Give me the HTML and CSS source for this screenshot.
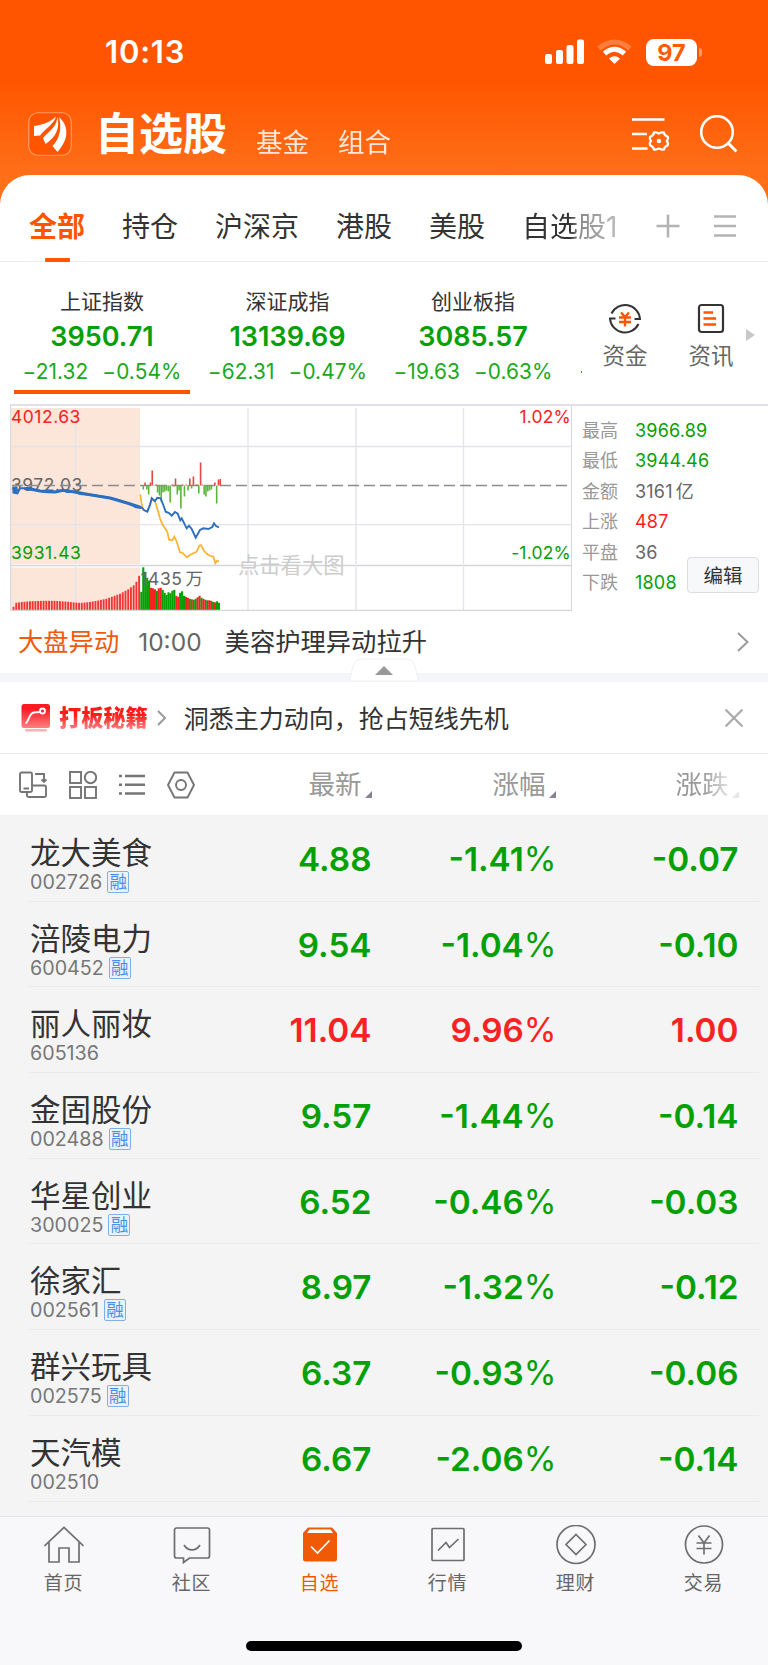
FILE: index.html
```html
<!DOCTYPE html>
<html lang="zh-CN">
<head>
    <meta charset="UTF-8">
    <meta name="viewport" content="width=device-width, initial-scale=1.0">
    <title>自选股</title>
    <link rel="stylesheet" href="styles.css">
</head>
<body>
    <header class="header">
        <div class="status-bar">
            <span class="time">10:13</span>
            <svg class="signal" width="40" height="26" viewBox="0 0 40 26" fill="#fff">
                <rect x="0" y="15" width="7" height="10" rx="2"/>
                <rect x="11" y="11" width="7" height="14" rx="2"/>
                <rect x="21.5" y="6" width="7" height="19" rx="2"/>
                <rect x="32" y="0.5" width="7" height="24.5" rx="2"/>
            </svg>
            <svg class="wifi" width="36" height="26" viewBox="0 0 36 26" fill="none" stroke="#fff">
                <path d="M2 9.5Q17.5 -3.5 33 9.5" stroke-width="5" opacity="0.25"/>
                <path d="M7.5 14.5Q17.5 6 27.5 14.5" stroke-width="5"/>
                <path d="M12 19.5Q17.5 15 23 19.5L17.5 25Z" fill="#fff" stroke="none"/>
            </svg>
            <span class="battery">97</span>
            <span class="battery-cap"></span>
        </div>
        <div class="title-bar">
            <svg class="logo" width="44" height="44" viewBox="0 0 44 44">
                <rect x="0.75" y="0.75" width="42.5" height="42.5" rx="9" fill="#ff5500" stroke="#ff9a66" stroke-width="1.2"/>
                <path d="M6 14C15 13 22 10 28 4.5C26 12 17 17 12 23.5L6 24Z" fill="#fff"/>
                <path d="M29 4.5C30 14 21 19 15 26L17.5 32C27 26 33 16 29 4.5Z" fill="#fff"/>
                <path d="M31 5C38 11 40 20 37 28C35 33 32 37 29.5 40L24.5 34C32 26 34 16 31 5Z" fill="#fff"/>
            </svg>
            <h1>自选股</h1>
            <span class="sub-title">基金</span>
            <span class="sub-title">组合</span>
            <svg class="manage" width="38" height="36" viewBox="0 0 38 36" fill="none" stroke="#fff" stroke-width="2.6">
                <path d="M0 3.5H32.5M0 18H15M0 32.5H15.5"/>
                <path d="M22 16.5Q24.5 16 26.9 17.6Q29.3 16 31.8 16.5Q32.2 19.4 35.8 20.8Q36.6 23 34.8 25Q36.6 27 35.8 29.2Q32.2 30.6 31.8 33.5Q29.3 34 26.9 32.4Q24.5 34 22 33.5Q21.6 30.6 18 29.2Q17.2 27 19 25Q17.2 23 18 20.8Q21.6 19.4 22 16.5Z" stroke-width="2.3" stroke-linejoin="round"/>
                <circle cx="26.9" cy="25" r="2.2" fill="#fff" stroke="none"/>
            </svg>
            <svg class="search" width="38" height="38" viewBox="0 0 38 38" fill="none" stroke="#fff" stroke-width="2.6">
                <circle cx="17" cy="17" r="15.8"/>
                <path d="M28 28L36.5 36.5" stroke-width="3"/>
            </svg>
        </div>
    </header>

    <main class="panel">
        <nav class="tabs">
            <span class="tab active">全部</span>
            <span class="tab">持仓</span>
            <span class="tab">沪深京</span>
            <span class="tab">港股</span>
            <span class="tab">美股</span>
            <span class="tab fade">自选股1</span>
            <svg class="tab-add" width="24" height="24" viewBox="0 0 24 24" stroke="#b3b3b3" stroke-width="2.6"><path d="M0.5 12H23.5M12 0.5V23.5"/></svg>
            <svg class="tab-menu" width="22" height="24" viewBox="0 0 22 24" stroke="#b3b3b3" stroke-width="2.6"><path d="M0 2.5H22M0 12H22M0 21.5H22"/></svg>
        </nav>

        <section class="indices">
            <div class="index-list">
                <div class="index active">
                    <div class="index-name">上证指数</div>
                    <div class="index-value">3950.71</div>
                    <div class="index-change"><span>−21.32</span><span>−0.54%</span></div>
                </div>
                <div class="index">
                    <div class="index-name">深证成指</div>
                    <div class="index-value">13139.69</div>
                    <div class="index-change"><span>−62.31</span><span>−0.47%</span></div>
                </div>
                <div class="index">
                    <div class="index-name">创业板指</div>
                    <div class="index-value">3085.57</div>
                    <div class="index-change"><span>−19.63</span><span>−0.63%</span></div>
                </div>
                <div class="index next"><span></span></div>
            </div>
            <div class="shortcut">
                <svg width="32" height="34" viewBox="0 0 32 34" fill="none" stroke="#333" stroke-width="2">
                    <path d="M2.5 11.5A15 15 0 0 1 31 17H25.5M29.5 22A15 15 0 0 1 1 16.5H6.5"/>
                    <path d="M12 10.5L16 15L20 10.5M10 15.5H22M10 20H22M16 15V24.5" stroke="#ff5500" stroke-width="2.4"/>
                </svg>
                <span>资金</span>
            </div>
            <div class="shortcut">
                <svg width="28" height="34" viewBox="0 0 28 34" fill="none" stroke="#333" stroke-width="2.2">
                    <rect x="2" y="3" width="24" height="27" rx="2.5"/>
                    <path d="M6.5 10.5H16M6.5 16.5H19M6.5 22.5H19" stroke="#ff5500" stroke-width="2.5"/>
                </svg>
                <span>资讯</span>
            </div>
            <span class="more-arrow"></span>
        </section>

        <section class="market">
            <svg id="chart" class="chart" width="562" height="208" viewBox="10 403 562 208">
                <g fill="#fce5d9">
                    <rect x="11" y="408" width="129" height="156"/>
                    <rect x="11" y="567.5" width="129" height="42.5"/>
                </g>
                <g fill="none" stroke="#e3e4ea" stroke-width="1.3">
                    <path d="M75.5 408V564M248 408V564M356 408V564M463.5 408V564M75.5 567V610M248 567V610M356 567V610M463.5 567V610"/>
                    <path d="M10 446.5H572M10 524.7H572"/>
                    <path d="M10.5 405V610M571.5 405V610" stroke="#dadbe2"/>
                    <path d="M10 565.5H572M10 610.3H572" stroke="#d5d6dc"/>
                </g>
                <text x="11" y="423" class="up wide">4012.63</text>
                <text x="571" y="423" class="up pct" text-anchor="end">1.02%</text>
                <text x="11" y="491" class="flat wide">3972.03</text>
                <text x="11" y="559" class="down wide">3931.43</text>
                <text x="571" y="559" class="down pct" text-anchor="end">-1.02%</text>
                <text x="238" y="573" class="hint">点击看大图</text>
                <path d="M12 485.5H571" stroke="#8c8c8c" stroke-width="1.6" stroke-dasharray="11 5"/>
                <g id="bars"></g>
                <polyline id="avgLine" fill="none" stroke="#fab32e" stroke-width="1.7"/>
                <polyline id="priceLine" fill="none" stroke="#2c6fc2" stroke-width="1.9"/>
                <path d="M14 487V493.5M16 486.5V493M25 488.5L34 489.7L40 491L55 492L63 490.3L75 492L90 494.7L110 498L128 503.3L141 507.5" fill="none" stroke="#2c6fc2" stroke-width="3"/>
                <text x="140.5" y="585" class="flat wide">1435<tspan dx="3">万</tspan></text>
            </svg>
            <dl class="stats">
                <dt>最高</dt><dd class="down">3966.89</dd>
                <dt>最低</dt><dd class="down">3944.46</dd>
                <dt>金额</dt><dd>3161<span>亿</span></dd>
                <dt>上涨</dt><dd class="up">487</dd>
                <dt>平盘</dt><dd>36</dd>
                <dt>下跌</dt><dd class="down">1808</dd>
            </dl>
            <button class="edit-btn">编辑</button>
        </section>

        <section class="news">
            <span class="news-tag">大盘异动</span>
            <span class="news-time">10:00</span>
            <span class="news-text">美容护理异动拉升</span>
            <svg width="12" height="20" viewBox="0 0 12 20" fill="none" stroke="#999" stroke-width="1.9"><path d="M1 1L10.5 10L1 19"/></svg>
            <svg class="collapse" width="70" height="24" viewBox="0 0 70 24">
                <path d="M0.5 23C4 10 3 1 13 1H57C67 1 66 10 69.5 23Z" fill="#fff" stroke="#eeeff2"/>
                <path d="M26 17L35 8L44 17Z" fill="#999"/>
            </svg>
        </section>

        <section class="promo">
            <svg width="30" height="30" viewBox="0 0 30 30">
                <defs>
                    <linearGradient id="redFade" x1="0" y1="0" x2="0" y2="1">
                        <stop offset="0.2" stop-color="#ff1a22"/>
                        <stop offset="1" stop-color="#ff8080"/>
                    </linearGradient>
                </defs>
                <rect x="0.5" y="1" width="28.5" height="24" rx="2.5" fill="url(#redFade)"/>
                <path d="M5 20C8 18 8 10 13 9.5L19 9" fill="none" stroke="#fff" stroke-width="1.8" stroke-linecap="round"/>
                <circle cx="21.5" cy="8" r="2.5" fill="none" stroke="#fff" stroke-width="1.8"/>
                <rect x="4" y="26" width="22" height="2.5" rx="1.2" fill="#ffb3b3"/>
            </svg>
            <span class="promo-tag">打板秘籍</span>
            <svg class="promo-arrow" width="10" height="18" viewBox="0 0 10 18" fill="none" stroke="#999" stroke-width="2"><path d="M1 2L8 9L1 16"/></svg>
            <span class="promo-text">洞悉主力动向，抢占短线先机</span>
            <svg width="18" height="18" viewBox="0 0 18 18" stroke="#aaa" stroke-width="2.2"><path d="M0.5 0.5L17.5 17.5M17.5 0.5L0.5 17.5"/></svg>
        </section>

        <div class="table-head">
            <div class="tools">
                <svg width="28" height="28" viewBox="0 0 28 28" fill="none" stroke="#757575" stroke-width="1.9">
                    <path d="M8 21H2.5A1.5 1.5 0 0 1 1 19.5V3A1.5 1.5 0 0 1 2.5 1.5H11.5A1.5 1.5 0 0 1 13 3V19.5A1.5 1.5 0 0 1 11.5 21H8V24.5A1.5 1.5 0 0 0 9.5 26H25.5A1.5 1.5 0 0 0 27 24.5V16A1.5 1.5 0 0 0 25.5 14.5H13"/>
                    <path d="M4.5 17.5H10M16 3H25V10M22.5 8.5L25 11L27.5 8.5"/>
                </svg>
                <svg width="28" height="28" viewBox="0 0 28 28" fill="none" stroke="#757575" stroke-width="1.9">
                    <rect x="1" y="1" width="11" height="11"/>
                    <circle cx="21.5" cy="6.5" r="5.7"/>
                    <rect x="1" y="16" width="11" height="11"/>
                    <rect x="16" y="16" width="11" height="11"/>
                </svg>
                <svg width="26" height="28" viewBox="0 0 26 28" stroke="#757575" stroke-width="2.4">
                    <path d="M0 5H3M6 5H26M0 13.7H3M6 13.7H26M0 22.5H3M6 22.5H26"/>
                </svg>
                <svg width="28" height="28" viewBox="0 0 28 28" fill="none" stroke="#757575" stroke-width="1.9">
                    <path d="M7.5 1.5H20.5L27 14L20.5 26.5H7.5L1 14Z" stroke-linejoin="round"/>
                    <circle cx="14" cy="14" r="5"/>
                </svg>
            </div>
            <span class="col">最新</span>
            <span class="col">涨幅</span>
            <span class="col fade-out">涨跌</span>
        </div>

        <div class="stocks">
            <div class="stock down">
                <div class="stock-name">龙大美食<small>002726<i>融</i></small></div>
                <b>4.88</b><b>-1.41<em>%</em></b><b>-0.07</b>
            </div>
            <div class="stock down">
                <div class="stock-name">涪陵电力<small>600452<i>融</i></small></div>
                <b>9.54</b><b>-1.04<em>%</em></b><b>-0.10</b>
            </div>
            <div class="stock up">
                <div class="stock-name">丽人丽妆<small>605136</small></div>
                <b>11.04</b><b>9.96<em>%</em></b><b>1.00</b>
            </div>
            <div class="stock down">
                <div class="stock-name">金固股份<small>002488<i>融</i></small></div>
                <b>9.57</b><b>-1.44<em>%</em></b><b>-0.14</b>
            </div>
            <div class="stock down">
                <div class="stock-name">华星创业<small>300025<i>融</i></small></div>
                <b>6.52</b><b>-0.46<em>%</em></b><b>-0.03</b>
            </div>
            <div class="stock down">
                <div class="stock-name">徐家汇<small>002561<i>融</i></small></div>
                <b>8.97</b><b>-1.32<em>%</em></b><b>-0.12</b>
            </div>
            <div class="stock down">
                <div class="stock-name">群兴玩具<small>002575<i>融</i></small></div>
                <b>6.37</b><b>-0.93<em>%</em></b><b>-0.06</b>
            </div>
            <div class="stock down">
                <div class="stock-name">天汽模<small>002510</small></div>
                <b>6.67</b><b>-2.06<em>%</em></b><b>-0.14</b>
            </div>
        </div>
    </main>

    <footer class="bottom-nav">
        <a class="nav-item">
            <svg width="40" height="40" viewBox="0 0 40 40" fill="none" stroke="#6e6e6e" stroke-width="1.7">
                <path d="M0.5 21L20 2.5L39.5 21M5 17.5V37H15V23H25V37H35V17.5"/>
            </svg>
            <span>首页</span>
        </a>
        <a class="nav-item">
            <svg width="40" height="40" viewBox="0 0 40 40" fill="none" stroke="#6e6e6e" stroke-width="1.7">
                <path d="M4.5 3H35.5A2 2 0 0 1 37.5 5V31A2 2 0 0 1 35.5 33H17.5L11.5 37.5V33H4.5A2 2 0 0 1 2.5 31V5A2 2 0 0 1 4.5 3Z"/>
                <path d="M12 20C16 26.5 24 26.5 28 20"/>
            </svg>
            <span>社区</span>
        </a>
        <a class="nav-item active">
            <svg width="40" height="40" viewBox="0 0 40 40" fill="none">
                <path d="M3 8L8 2.5H32L37 8V34A2.5 2.5 0 0 1 34.5 36.5H5.5A2.5 2.5 0 0 1 3 34Z" fill="#f05a05"/>
                <path d="M7 8L9.5 4.5H30.5L33 8Z" fill="#fff"/>
                <path d="M11 21.5L17.5 28L29.5 15.5" stroke="#fff" stroke-width="1.7"/>
            </svg>
            <span>自选</span>
        </a>
        <a class="nav-item">
            <svg width="40" height="40" viewBox="0 0 40 40" fill="none" stroke="#6e6e6e" stroke-width="1.7">
                <rect x="4" y="3.5" width="32" height="32" rx="1"/>
                <path d="M10 25.5L18 17.5L21.5 22.5L30.5 14"/>
            </svg>
            <span>行情</span>
        </a>
        <a class="nav-item">
            <svg width="40" height="40" viewBox="0 0 40 40" fill="none" stroke="#6e6e6e" stroke-width="1.7">
                <circle cx="20" cy="19.5" r="19"/>
                <path d="M20 9.5L30 19.5L20 29.5L10 19.5Z"/>
            </svg>
            <span>理财</span>
        </a>
        <a class="nav-item">
            <svg width="40" height="40" viewBox="0 0 40 40" fill="none" stroke="#6e6e6e" stroke-width="1.7">
                <circle cx="20" cy="19.5" r="18.5"/>
                <path d="M14.5 10.5L20 18L25.5 10.5M12.5 18H27.5M12.5 23.5H27.5M20 18V29.5"/>
            </svg>
            <span>交易</span>
        </a>
        <div class="home-indicator"></div>
    </footer>

    <script src="chart.js"></script>
</body>
</html>
```

FILE: styles.css
```css
* {
    box-sizing: border-box;
}
body {
    margin: 0;
    width: 768px;
    height: 1665px;
    overflow: hidden;
    display: flex;
    flex-direction: column;
    font-family: Inter, "Noto Sans CJK SC", sans-serif;
    color: #333;
    background: linear-gradient(#ff5500 0, #ff5500 78px, #ff7019 180px);
}
svg {
    display: block;
    flex: none;
}
.up {
    color: #f82222;
    fill: #f82222;
}
.down {
    color: #05a005;
    fill: #05a005;
}

/* Header */
.header {
    height: 175px;
    flex: none;
    color: #fff;
}
.status-bar {
    display: flex;
    align-items: center;
    height: 54px;
    margin: 25px 66px 0 105px;
}
.time {
    font-size: 31px;
    font-weight: 600;
    letter-spacing: 0.8px;
    line-height: 54px;
    height: 54px;
    margin-right: auto;
}
.wifi {
    margin: 0 13px 0 12px;
}
.battery {
    width: 51px;
    height: 27px;
    line-height: 27px;
    border-radius: 8px;
    background: #fff;
    color: #ff5a05;
    font-size: 23.5px;
    font-weight: 700;
    text-align: center;
}
.battery-cap {
    width: 3px;
    height: 9px;
    margin-left: 2px;
    border-radius: 0 4px 4px 0;
    background: #ff9a66;
}
.title-bar {
    display: flex;
    align-items: center;
    height: 60px;
    margin-top: 25px;
    padding: 0 30px 0 28px;
}
.title-bar h1 {
    width: 132px;
    margin: 0 10px 0 23px;
    font-size: 44px;
    font-weight: 700;
    line-height: 60px;
    white-space: nowrap;
}
.sub-title {
    margin: 15px 0 0 19px;
    width: 53px;
    font-size: 26.5px;
    line-height: 36px;
    opacity: 0.85;
}
.sub-title + .sub-title {
    margin-left: 29px;
}
.manage {
    margin-left: auto;
}
.search {
    margin-left: 30px;
}

/* White panel */
.panel {
    flex: 1;
    min-height: 0;
    overflow: hidden;
    background: #fff;
    border-radius: 30px 30px 0 0;
}
.tabs {
    display: flex;
    align-items: center;
    height: 87px;
    padding: 15px 32px 0 29px;
    border-bottom: 1px solid #ececec;
    font-size: 28px;
}
.tab {
    position: relative;
    height: 72px;
    line-height: 74px;
    margin-right: 37px;
    white-space: nowrap;
}
.tab.active {
    color: #ff5500;
    font-weight: 700;
}
.tab.active::after {
    content: "";
    position: absolute;
    left: 16px;
    bottom: 0;
    width: 25px;
    height: 4px;
    border-radius: 1px;
    background: #ff5500;
}
.tab.fade {
    margin-right: auto;
    color: transparent;
    background: linear-gradient(90deg, #333 50%, #888 60%, #bbb 100%);
    -webkit-background-clip: text;
    background-clip: text;
}
.tab-add {
    margin-right: 34px;
}

/* Index quotes */
.indices {
    display: flex;
    height: 142px;
    padding-left: 14px;
}
.index-list {
    display: flex;
    gap: 9.5px;
    width: 568px;
    overflow: hidden;
}
.index {
    flex: none;
    width: 176px;
    height: 132px;
    padding-top: 24px;
    text-align: center;
    white-space: nowrap;
}
.index.active {
    border-bottom: 4px solid #ff5500;
}
.index-name {
    font-size: 21px;
    line-height: 31px;
}
.index-value {
    color: #05a005;
    font-size: 27px;
    font-weight: 600;
    line-height: 40px;
}
.index-change {
    display: flex;
    justify-content: center;
    gap: 14px;
    color: #1ba81b;
    font-size: 20.8px;
    letter-spacing: 0.1px;
    line-height: 30px;
}
.index.next span {
    display: block;
    width: 2px;
    height: 2px;
    margin: 85px 0 0 10px;
    background: #1ba81b;
}
.shortcut {
    display: flex;
    flex-direction: column;
    align-items: center;
    width: 86px;
    padding-top: 40px;
    font-size: 22.5px;
    line-height: 40px;
    color: #666;
}
.more-arrow {
    margin: 67px 0 0 -8px;
    height: 12px;
    border: 6px solid transparent;
    border-left: 9px solid #c8c8c8;
    border-right: 0;
}

/* Chart */
.market {
    position: relative;
    display: flex;
    height: 207px;
    padding-left: 10px;
    background: linear-gradient(#e0e1e8, #e0e1e8) 10px 0 / 100% 2px no-repeat;
}
.chart {
    margin-top: -1px;
    font-size: 17.5px;
}
.chart .wide {
    letter-spacing: 0.5px;
}
.chart .pct {
    letter-spacing: 0.2px;
}
.chart .flat {
    fill: #666;
}
.chart .hint {
    font-size: 21.3px;
    fill: #ccc;
}
.stats {
    display: grid;
    grid-template-columns: 53px auto;
    grid-auto-rows: 30.4px;
    margin: 12px 0 0 10px;
    font-size: 18px;
    line-height: 30px;
}
.stats dt {
    color: #999;
}
.stats dd {
    margin: 0;
    color: #666;
    letter-spacing: 0.2px;
}
.stats dd span {
    margin-left: 3px;
}
.stats dd.up {
    color: #f82222;
}
.stats dd.down {
    color: #05a005;
}
.edit-btn {
    position: absolute;
    right: 9px;
    top: 153px;
    width: 72px;
    height: 36px;
    padding: 0 0 2px;
    border: 1px solid #dcdde2;
    border-radius: 4px;
    background: #f7f8fa;
    color: #333;
    font: 19.5px Inter, "Noto Sans CJK SC", sans-serif;
}

/* News line */
.news {
    position: relative;
    display: flex;
    align-items: center;
    height: 71px;
    padding: 0 19px 0 18px;
    border-bottom: 9px solid #f5f6f9;
    font-size: 25.3px;
    line-height: 40px;
}
.news-tag {
    color: #f15a0c;
}
.news-time {
    margin: 0 23px 0 19px;
    color: #666;
    font-size: 24.5px;
}
.news-text {
    margin-right: auto;
}
.collapse {
    position: absolute;
    left: 349px;
    top: 47px;
}

/* Promo line */
.promo {
    display: flex;
    align-items: center;
    height: 72px;
    padding: 0 25px 0 21px;
    border-bottom: 1px solid #e9e9e9;
    font-size: 25px;
}
.promo-tag {
    margin: 0 9px 0 8px;
    font-size: 22.2px;
    font-weight: 900;
    line-height: 32px;
    color: transparent;
    background: linear-gradient(#ff1a1a 40%, #ff8a8a 90%);
    -webkit-background-clip: text;
    background-clip: text;
}
.promo-text {
    margin: 0 auto 2px 17px;
}

/* Stock table */
.table-head,
.stock {
    display: grid;
    grid-template-columns: 211.5px 130px 184px 183px;
}
.table-head {
    align-items: center;
    height: 61px;
    padding-left: 30px;
    color: #999;
    font-size: 26.5px;
}
.tools {
    display: flex;
    gap: 22px;
    margin-left: -11px;
}
.col {
    display: flex;
    justify-content: flex-end;
    align-items: flex-end;
    line-height: 43px;
}
.col::after {
    content: "";
    margin: 0 0 8px 3px;
    border-left: 7px solid transparent;
    border-bottom: 7px solid #858590;
}
.fade-out {
    -webkit-mask-image: linear-gradient(90deg, #000 80%, rgba(0, 0, 0, 0.2) 96%);
    mask-image: linear-gradient(90deg, #000 80%, rgba(0, 0, 0, 0.2) 96%);
}
.stocks {
    height: 701px;
    padding: 0 9px 0 29px;
    border-top: 1px solid #efefef;
    background: #f4f4f4;
}
.stock {
    height: 85.7px;
    padding-left: 1px;
    border-bottom: 1px solid #eaeaea;
}
.stock-name {
    padding-top: 16px;
    color: #333;
    font-size: 30.5px;
    line-height: 41px;
    white-space: nowrap;
}
.stock-name small {
    display: flex;
    align-items: center;
    height: 18px;
    font-size: 19.7px;
    line-height: 18px;
    color: #777;
}
.stock-name i {
    width: 22px;
    height: 22px;
    margin-left: 5px;
    border: 1px solid #7fb0ec;
    border-radius: 2px;
    background: #eaf3fd;
    color: #4a90e2;
    font-size: 17.5px;
    font-style: normal;
    line-height: 20px;
    text-align: center;
}
.stock b {
    font-size: 33.3px;
    font-weight: 600;
    line-height: 87px;
    text-align: right;
}
.stock b:nth-of-type(2) {
    margin-right: -1px;
}
.stock em {
    font-style: normal;
    font-weight: 400;
}

/* Bottom navigation */
.bottom-nav {
    position: relative;
    display: flex;
    flex: none;
    height: 149px;
    border-top: 1px solid #e4e4e6;
    background: #f8f8fb;
}
.nav-item {
    display: flex;
    flex-direction: column;
    align-items: center;
    width: 128px;
    padding-top: 8px;
    color: #666;
    font-size: 19px;
    line-height: 37px;
    letter-spacing: 0.8px;
}
.nav-item span {
    margin-right: 1px;
}
.nav-item.active {
    color: #f05a05;
}
.home-indicator {
    position: absolute;
    left: 246px;
    bottom: 14px;
    width: 276px;
    height: 10px;
    border-radius: 5px;
    background: #000;
}
```

FILE: chart.js
```javascript
const RED = '#f82222';
const GREEN = '#05a005';
const bars = document.getElementById('bars');

function addBar(x, top, bottom, width, color) {
    const rect = document.createElementNS('http://www.w3.org/2000/svg', 'rect');
    rect.setAttribute('x', x);
    rect.setAttribute('y', top);
    rect.setAttribute('width', width);
    rect.setAttribute('height', Math.max(bottom - top, 0.5));
    rect.setAttribute('fill', color);
    bars.appendChild(rect);
}

// auction volume, heights from 9:15 to 9:30
const auction = [3, 7, 7.4, 7.8, 8, 8.3, 8.5, 8.6, 8.7, 8.8, 8.9, 9, 9, 9, 9, 9, 8.8, 8.6, 8.5, 8.3, 8, 7.7, 7.4, 7.2, 7, 7,
    7.2, 7.5, 7.9, 8.3, 8.8, 9.3, 9.9, 10.5, 11, 12, 13, 14, 15, 16, 17.5, 19, 20.5, 22.5, 24.5, 28, 34];
auction.forEach((h, i) => addBar(12.6 + i * 2.73, 609.8 - h, 609.8, 1.9, '#ef3535'));

// minute volume: positive is a rising minute
const volume = [-18, -42.5, -38, -32, -29, 22, 21.5, 20.5, -19, 21.5, 22, -20, -17, -15, -17.5, -16.5,
    -19, -20, 14, 13, -17, -18.5, -14, 13, 12, -11, 10.5, -10, -11, 12.5, 14, -12, 11, 10, -9.5, 9.5, 9, -8, 7.5, -8.5, -7];
volume.forEach((v, i) => addBar(140.3 + i * 1.94, 609.8 - Math.abs(v), 609.8, 2.1, v > 0 ? RED : GREEN));

// strength bars round the zero line
const power = [0, -4, 3, -4, -9, 3, 15, 0, 1, -7, -10, -16, -7, -6, -5, -6, -17, 1, -1, 7, -9, -5, -23, 1, -11, 1, -5, 7, -3, 9, 0,
    1, -8, 23, 1, -9, -11, -6, -5, -4, 0, 3, -18, 6, 6.5];
power.forEach((v, i) => {
    const x = 140.7 + i * 1.79;
    addBar(x, v > 0 ? 485.5 - v : 485.5, v > 0 ? 485.5 : 485.5 - v, 1.6, v > 0 ? '#e84545' : '#5cb53c');
});

const price = [13.3, 486.5, 15, 493, 17.5, 493.5, 20, 488.3, 25, 488.3, 30, 487.6, 34, 489.7, 40, 491, 47, 492.3,
    55, 492, 63, 490.3, 67, 492, 75, 492, 80, 494, 90, 494.7, 100, 496.3, 110, 498, 117, 499.7, 123, 501.7,
    128, 503.3, 133, 505.7, 136, 507.3, 141.7, 507.7, 144, 510, 147.3, 511.7, 150, 505, 151.7, 498.3, 155, 501,
    157.3, 497.7, 160.7, 498.3, 163.3, 505, 165.7, 511.7, 169, 513, 171.7, 515.7, 175, 512, 177.7, 513.7,
    180.3, 520.3, 181.7, 518.3, 186.7, 528.3, 189, 525.7, 191.7, 529, 195.7, 537.7, 200, 530, 203.3, 528.3,
    208.3, 529, 212.3, 527, 214, 523.3, 216, 526, 219, 527.3];
const average = [140.3, 494.3, 141.5, 503, 143.3, 510, 147.3, 511.7, 150, 504, 151.7, 500, 155, 501, 157.7, 510,
    160, 518.3, 162.3, 524.3, 165, 528.3, 167.3, 531.7, 169, 539.7, 172.3, 540.3, 174.3, 536.7, 176.7, 541.7,
    180, 552.3, 182.7, 553, 186.7, 557.3, 190, 555, 193.3, 553.3, 196.7, 551.7, 199.3, 545.7, 201, 545,
    204, 550.7, 207.3, 554.3, 210, 555.7, 213.3, 556.7, 215.3, 563.3, 216.7, 561, 219, 561.3];
document.getElementById('priceLine').setAttribute('points', price.join(' '));
document.getElementById('avgLine').setAttribute('points', average.join(' '));
```
